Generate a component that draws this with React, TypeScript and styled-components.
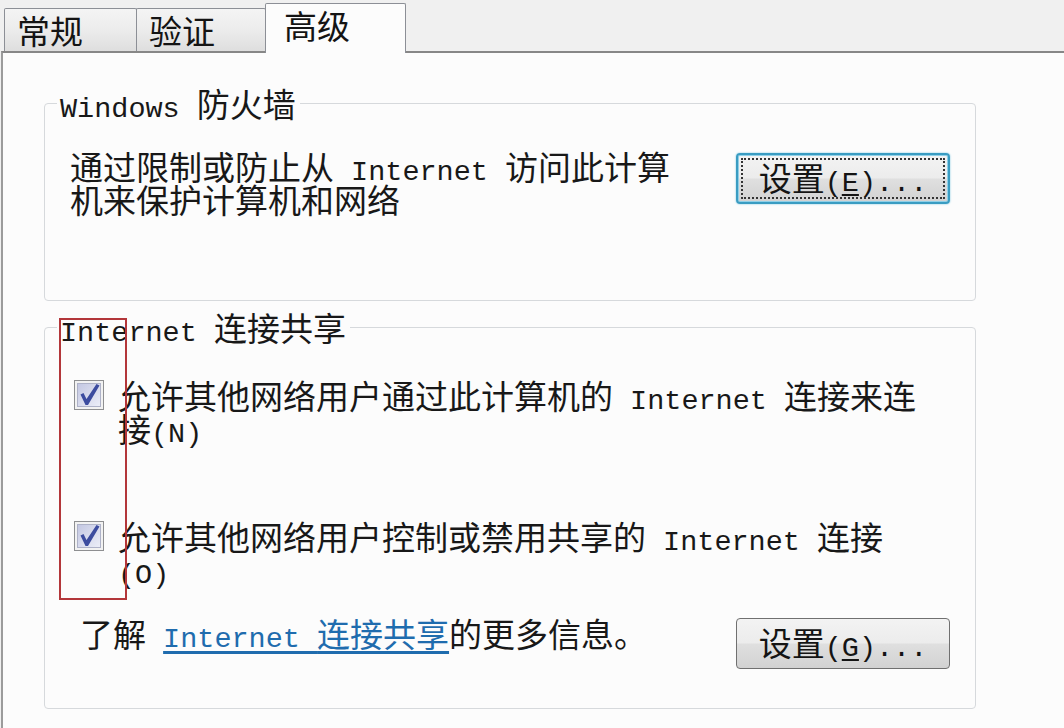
import React from 'react';
import styled, { createGlobalStyle } from 'styled-components';

const GlobalStyle = createGlobalStyle`
  html, body {
    margin: 0;
    padding: 0;
    background: #f0f0f0;
  }
  body {
    font-family: "Noto Sans CJK SC", "Liberation Sans", sans-serif;
    color: #181818;
  }
`;

const Root = styled.div`
  position: relative;
  width: 1064px;
  height: 728px;
  overflow: hidden;
  background: #f0f0f0;
`;

const TabStrip = styled.div`
  display: flex;
  align-items: flex-end;
  height: 51px;
  padding-left: 5px;
`;

const Tab = styled.div<{ $active?: boolean; $width: number }>`
  position: relative;
  z-index: ${(p) => (p.$active ? 2 : 1)};
  box-sizing: border-box;
  width: ${(p) => p.$width}px;
  height: ${(p) => (p.$active ? 50 : 43)}px;
  margin-left: -1px;
  margin-bottom: ${(p) => (p.$active ? '-2px' : '0')};
  padding: 5px 0 0 ${(p) => (p.$active ? 18 : 12)}px;
  border: 1px solid #8c8f96;
  border-bottom: none;
  border-radius: 2px 2px 0 0;
  background: ${(p) => (p.$active ? '#fcfcfc' : 'linear-gradient(#f4f4f4 0%, #ececec 50%, #dedede 100%)')};
  font-size: 33px;
  line-height: 33px;
  color: #141414;
`;

const Panel = styled.div`
  box-sizing: border-box;
  height: 677px;
  margin-left: 1px;
  padding: 33px 0 0 41px;
  border-top: 2px solid #878787;
  border-left: 2px solid #9b9b9b;
  background: #fcfcfc;
`;

const Group = styled.fieldset<{ $gap?: number }>`
  box-sizing: border-box;
  width: 932px;
  min-inline-size: 0;
  margin: ${(p) => p.$gap ?? 0}px 0 0 0;
  padding: 0;
  border: 1px solid #d6d9dc;
  border-radius: 4px;
`;

const Legend = styled.legend`
  margin-left: 12px;
  padding: 0 4px 0 3px;
  font-size: 33px;
  line-height: 34px;
  white-space: nowrap;
`;

const GroupBody = styled.div<{ $pt: number; $pb: number; $pl: number }>`
  padding: ${(p) => p.$pt}px 25px ${(p) => p.$pb}px ${(p) => p.$pl}px;
`;

const SplitRow = styled.div`
  display: flex;
  justify-content: space-between;
  align-items: flex-start;
`;

const Text = styled.div`
  font-size: 33px;
  line-height: 33px;
  white-space: nowrap;
`;

const Lat = styled.span`
  font-family: "Liberation Mono", "DejaVu Sans Mono", monospace;
  font-size: 28.5px;
  line-height: 0;
  white-space: pre;
`;

const Mnemonic = styled.span`
  text-decoration: underline;
  text-underline-offset: 3px;
`;

const Button = styled.button<{ $focused?: boolean }>`
  position: relative;
  box-sizing: border-box;
  width: 214px;
  height: 51px;
  margin-top: ${(p) => (p.$focused ? 3 : 1)}px;
  padding: 0 0 2px 0;
  border: ${(p) => (p.$focused ? '2px solid #3a9cc2' : '1px solid #707070')};
  border-radius: 4px;
  box-shadow: ${(p) => (p.$focused ? 'inset 0 0 0 1px #8fd0e8, 0 0 2px #6fc0de' : 'none')};
  background: linear-gradient(#f3f3f3 0%, #ececec 48%, #dfdfdf 52%, #d2d2d2 100%);
  font-family: "Noto Sans CJK SC", "Liberation Sans", sans-serif;
  font-size: 33px;
  line-height: 33px;
  color: #141414;
  white-space: nowrap;

  &::after {
    content: '';
    display: ${(p) => (p.$focused ? 'block' : 'none')};
    position: absolute;
    inset: 3px;
    border: 2px dotted #333;
    border-radius: 1px;
  }
`;

const CheckRow = styled.div<{ $gap?: number }>`
  display: flex;
  align-items: flex-start;
  gap: 14px;
  margin-top: ${(p) => p.$gap ?? 0}px;
`;

const BoxWrap = styled.div`
  flex: none;
  width: 30px;
  height: 30px;
  margin-top: 1px;
`;

const LinkRow = styled(SplitRow)`
  margin-top: 31px;
  padding-left: 6px;
`;

const Link = styled.a`
  color: #1f6cae;
  text-decoration: underline;
  text-underline-offset: 4px;
  cursor: pointer;
`;

const Highlight = styled.div`
  position: absolute;
  left: 59px;
  top: 318px;
  width: 68px;
  height: 282px;
  box-sizing: border-box;
  border: 2px solid #b3363a;
  pointer-events: none;
`;

const CheckBox: React.FC = () => (
  <BoxWrap>
    <svg width="30" height="30" viewBox="0 0 30 30">
      <defs>
        <linearGradient id="cbFill" x1="0" y1="0" x2="1" y2="1">
          <stop offset="0" stopColor="#c3c7e2" />
          <stop offset="1" stopColor="#eceef8" />
        </linearGradient>
      </defs>
      <rect x="0.5" y="0.5" width="29" height="29" fill="#f2f2f2" stroke="#8e8f91" />
      <rect x="3.5" y="3.5" width="23" height="23" fill="url(#cbFill)" stroke="#aeb2c8" />
      <path d="M6.5 14.5 L9.5 13 L12.5 19 L22.5 4 L25.5 5.5 L14 25 L11.5 25 Z" fill="#3c4c9f" />
    </svg>
  </BoxWrap>
);

const App: React.FC = () => (
  <Root>
    <GlobalStyle />
    <TabStrip>
      <Tab $width={133}>常规</Tab>
      <Tab $width={130}>验证</Tab>
      <Tab $width={141} $active>
        高级
      </Tab>
    </TabStrip>
    <Panel>
      <Group>
        <Legend>
          <Lat>Windows </Lat>防火墙
        </Legend>
        <GroupBody $pt={30} $pb={84} $pl={25}>
          <SplitRow>
            <Text>
              通过限制或防止从<Lat> Internet </Lat>访问此计算
              <br />
              机来保护计算机和网络
            </Text>
            <Button $focused>
              设置<Lat>(</Lat>
              <Lat>
                <Mnemonic>E</Mnemonic>
              </Lat>
              <Lat>)...</Lat>
            </Button>
          </SplitRow>
        </GroupBody>
      </Group>
      <Group $gap={9}>
        <Legend>
          <Lat>Internet </Lat>连接共享
        </Legend>
        <GroupBody $pt={35} $pb={39} $pl={29}>
          <CheckRow>
            <CheckBox />
            <Text>
              允许其他网络用户通过此计算机的<Lat> Internet </Lat>连接来连
              <br />
              接<Lat>(N)</Lat>
            </Text>
          </CheckRow>
          <CheckRow $gap={75}>
            <CheckBox />
            <Text>
              允许其他网络用户控制或禁用共享的<Lat> Internet </Lat>连接
              <br />
              <Lat>(O)</Lat>
            </Text>
          </CheckRow>
          <LinkRow>
            <Text>
              了解<Lat> </Lat>
              <Link>
                <Lat>Internet </Lat>连接共享
              </Link>
              的更多信息。
            </Text>
            <Button>
              设置<Lat>(</Lat>
              <Lat>
                <Mnemonic>G</Mnemonic>
              </Lat>
              <Lat>)...</Lat>
            </Button>
          </LinkRow>
        </GroupBody>
      </Group>
    </Panel>
    <Highlight />
  </Root>
);

export default App;
